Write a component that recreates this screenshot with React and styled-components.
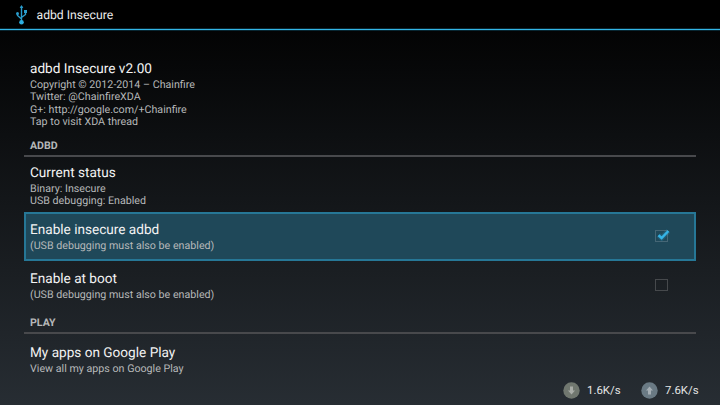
import React from "react";
import styled, { createGlobalStyle } from "styled-components";

const Global = createGlobalStyle`
  * { box-sizing: border-box; }
  body { margin: 0; background: #000; font-family: Roboto, sans-serif; overflow: hidden; text-rendering: geometricPrecision; }
`;
const Screen = styled.main`
  width: 720px; height: 405px; display: flex; flex-direction: column;
  background: linear-gradient(#000 0%, #272d33 100%); color: #f3f3f3;
  position: relative;
`;
const ActionBar = styled.header`
  height: 30px; flex: none; display: flex; align-items: center; padding: 1px 0 0 15px; gap: 8.5px;
  border-bottom: 1px solid #33b5e5; box-shadow: 0 1px 0 #082631, inset 0 -1px 0 #082631;
  background: #000; font-size: 12.2px; color: #ececec;
`;
const UsbIcon = styled.svg`
  width: 13px; height: 20px; display: block;
`;
const List = styled.div`
  margin: 24px 24px 0; display: flex; flex-direction: column;
`;
const Item = styled.section`
  height: ${(p) => p.$h}px; padding: ${(p) => p.$top}px 26px 0 6px;
  display: flex; justify-content: space-between;
`;
const SelectedItem = styled(Item)`
  background: #1f4859; box-shadow: inset 0 0 0 2px #267796;
`;
const Title = styled.h2`
  margin: 0; font-size: 13.6px; line-height: 18px; font-weight: 400; white-space: nowrap;
`;
const Summary = styled.p`
  margin: 0; font-size: 10.7px; line-height: 12.3px; color: #b6b8b9; white-space: nowrap;
`;
const Summaries = styled.div`
  padding-top: 1.1px;
`;
const Category = styled.h3`
  margin: 0; height: 21px; padding: 4px 6px 0; font-size: 10.6px; line-height: 12px;
  font-weight: 700; color: #b6b8b9; border-bottom: 2px solid #48494c;
`;
const CheckIcon = styled.svg`
  width: 17px; height: 15px; margin-top: 8px; display: block; overflow: visible;
`;
const NetStats = styled.aside`
  position: absolute; left: 563px; bottom: 6px; display: flex; gap: 21px;
`;
const Stat = styled.div`
  width: 57px; display: flex; align-items: center; gap: 7px; font-size: 11.4px; line-height: 17px;
  color: #e4e5e5; white-space: nowrap;
`;
const StatIcon = styled.svg`
  width: 17px; height: 17px; flex: none; display: block;
`;

function Checkbox({ checked }) {
  return (
    <CheckIcon viewBox="0 0 17 15">
      <rect x="2.5" y="1.5" width="12" height="11" fill="none" stroke={checked ? "#456675" : "#46494c"} />
      {checked && (
        <>
          <path d="M5.5 6.2L8.6 9L15.4 2" fill="none" stroke="#35b3e6" strokeOpacity=".2" strokeWidth="5" />
          <path d="M5.5 6.2L8.6 9L15.4 2" fill="none" stroke="#35b3e6" strokeWidth="2.5" />
        </>
      )}
    </CheckIcon>
  );
}

function Entry({ title, lines, children }) {
  return (
    <>
      <div>
        <Title>{title}</Title>
        <Summaries>
          {lines.map((line) => <Summary key={line}>{line}</Summary>)}
        </Summaries>
      </div>
      {children}
    </>
  );
}

export default function App() {
  return (
    <Screen>
      <Global />
      <ActionBar>
        <UsbIcon viewBox="0 0 13 20" fill="none" stroke="#2a9ccb" strokeWidth="1.4">
          <path d="M6.5 1V16M2.5 9V10.5L6.5 14M10.5 7V9.5L6.5 12.5" />
          <path d="M6.5 0L8.3 3H4.7Z" fill="#2a9ccb" stroke="none" />
          <circle cx="2.5" cy="8.6" r="1.5" fill="#2a9ccb" stroke="none" />
          <path d="M9 5H12V8H9Z" fill="#2a9ccb" stroke="none" />
          <circle cx="6.5" cy="17.2" r="2.3" fill="#2eaee0" stroke="none" />
        </UsbIcon>
        adbd Insecure
      </ActionBar>
      <List>
        <Item $h={82} $top={6}>
          <Entry title="adbd Insecure v2.00" lines={["Copyright © 2012-2014 – Chainfire", "Twitter: @ChainfireXDA", "G+: http://google.com/+Chainfire", "Tap to visit XDA thread"]} />
        </Item>
        <Category>ADBD</Category>
        <Item $h={55} $top={7}>
          <Entry title="Current status" lines={["Binary: Insecure", "USB debugging: Enabled"]} />
        </Item>
        <SelectedItem $h={49} $top={9}>
          <Entry title="Enable insecure adbd" lines={["(USB debugging must also be enabled)"]}>
            <Checkbox checked />
          </Entry>
        </SelectedItem>
        <Item $h={52} $top={9}>
          <Entry title="Enable at boot" lines={["(USB debugging must also be enabled)"]}>
            <Checkbox />
          </Entry>
        </Item>
        <Category>PLAY</Category>
        <Item $h={50} $top={10}>
          <Entry title="My apps on Google Play" lines={["View all my apps on Google Play"]} />
        </Item>
      </List>
      <NetStats>
        <Stat>
          <StatIcon viewBox="0 0 17 17">
            <circle cx="8.5" cy="8.5" r="8.2" fill="#70776f" />
            <path d="M7 4.5H10V8.5H12L8.5 12.5L5 8.5H7Z" fill="#a9ada8" />
          </StatIcon>
          1.6K/s
        </Stat>
        <Stat>
          <StatIcon viewBox="0 0 17 17">
            <circle cx="8.5" cy="8.5" r="8.2" fill="#6a7a84" />
            <path d="M7 12.5H10V8.5H12L8.5 4.5L5 8.5H7Z" fill="#a5aeb4" />
          </StatIcon>
          7.6K/s
        </Stat>
      </NetStats>
    </Screen>
  );
}
